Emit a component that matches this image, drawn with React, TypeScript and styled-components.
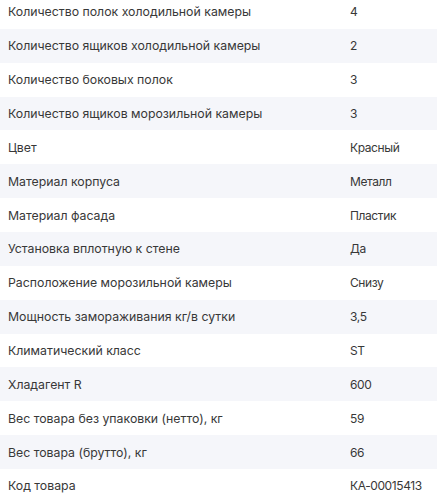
import React from 'react';
import styled, { createGlobalStyle } from 'styled-components';

const GlobalStyle = createGlobalStyle`
  html, body {
    margin: 0;
    padding: 0;
    background: #fff;
  }
  body {
    font-family: Inter, "Noto Sans", sans-serif;
    -webkit-font-smoothing: antialiased;
  }
`;

interface Spec {
  name: string;
  value: string;
}

const specs: Spec[] = [
  { name: 'Количество полок холодильной камеры', value: '4' },
  { name: 'Количество ящиков холодильной камеры', value: '2' },
  { name: 'Количество боковых полок', value: '3' },
  { name: 'Количество ящиков морозильной камеры', value: '3' },
  { name: 'Цвет', value: 'Красный' },
  { name: 'Материал корпуса', value: 'Металл' },
  { name: 'Материал фасада', value: 'Пластик' },
  { name: 'Установка вплотную к стене', value: 'Да' },
  { name: 'Расположение морозильной камеры', value: 'Снизу' },
  { name: 'Мощность замораживания кг/в сутки', value: '3,5' },
  { name: 'Климатический класс', value: 'ST' },
  { name: 'Хладагент R', value: '600' },
  { name: 'Вес товара без упаковки (нетто), кг', value: '59' },
  { name: 'Вес товара (брутто), кг', value: '66' },
  { name: 'Код товара', value: 'КА-00015413' },
];

const Table = styled.div`
  display: flex;
  flex-direction: column;
  margin-top: -5px;
`;

const Row = styled.div<{ $shaded: boolean }>`
  display: grid;
  grid-template-columns: 342px 1fr;
  align-items: center;
  height: 33.86px;
  padding: 0 8px;
  background: ${p => (p.$shaded ? '#f5f6fa' : '#fff')};
  color: #383838;
`;

const Name = styled.div`
  white-space: nowrap;
  font-size: 12.3px;
`;

const Value = styled.div`
  white-space: nowrap;
  font-size: 12px;
  letter-spacing: -0.4px;
`;

export default function App() {
  return (
    <>
      <GlobalStyle />
      <Table>
        {specs.map((s, i) => (
          <Row key={s.name} $shaded={i % 2 === 1}>
            <Name>{s.name}</Name>
            <Value>{s.value}</Value>
          </Row>
        ))}
      </Table>
    </>
  );
}
